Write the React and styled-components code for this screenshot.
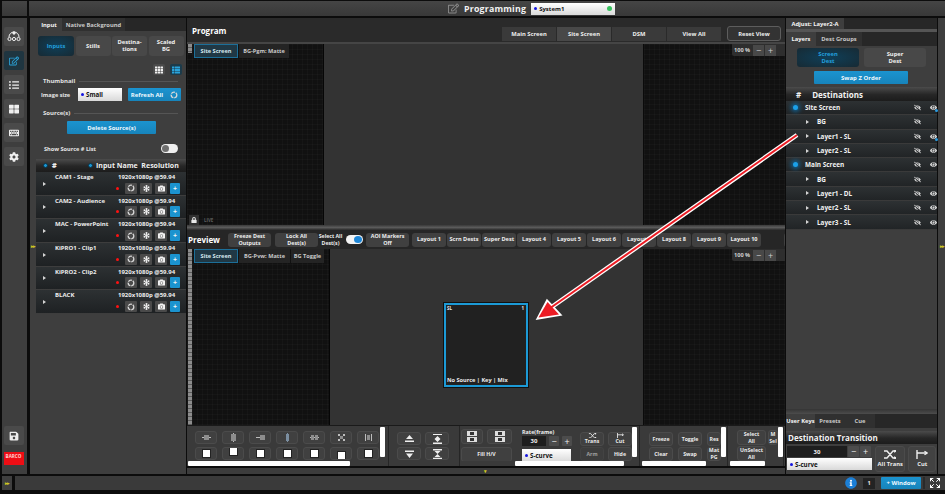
import React from 'react';
import styled, { createGlobalStyle } from 'styled-components';
import {
  FaRegEdit, FaListUl, FaThLarge, FaKeyboard, FaCog, FaSave, FaCamera, FaEye, FaEyeSlash,
  FaLock, FaInfoCircle, FaTh, FaThList, FaSnowflake,
} from 'react-icons/fa';
import { LuExpand } from 'react-icons/lu';

const GlobalStyle = createGlobalStyle`
  html, body { margin: 0; padding: 0; background: #0c0c0c; overflow: hidden; }
  * { box-sizing: border-box; }
`;

const FONT = `'Open Sans', 'Liberation Sans', sans-serif`;
const BLUE = '#1b93cf';
const PANEL = '#3e3e3e';

const Screen = styled.div`
  position: relative;
  width: 945px;
  height: 494px;
  background: #0c0c0c;
  overflow: hidden;
  font-family: ${FONT};
  font-weight: 700;
  font-size: 6px;
  color: #eee;
  display: flex;
  flex-direction: column;
  padding-top: 1px;
`;

const TopBar = styled.div`
  height: 15px;
  margin-bottom: 2px;
  display: grid;
  grid-template-columns: 25px 1fr;
  column-gap: 2px;
  padding-left: 2px;
`;

const TopBlock = styled.div`
  background: linear-gradient(#454545, #383838);
`;

const TopTitleBar = styled(TopBlock)`
  display: flex;
  align-items: center;
  padding-left: 419px;
  color: #8b8b8b;
  font-size: 11px;
`;

const TopTitle = styled.span`
  font-size: 8.8px;
  letter-spacing: 0.2px;
  color: #f2f2f2;
  margin: 0 5px 0 5px;
`;

const WhiteSelect = styled.div`
  display: flex;
  align-items: center;
  gap: 2px;
  background: linear-gradient(#ffffff, #d9d9d9);
  color: #111;
  font-size: ${p => p.$size || 6}px;
  width: ${p => p.$w}px;
  height: ${p => p.$h}px;
  padding-left: 3px;
  flex-shrink: 0;
  position: relative;
  & > i { width: 3px; height: 3px; border-radius: 50%; background: #1414e0; flex-shrink: 0; }
`;

const Led = styled.b`
  position: absolute;
  right: 3px;
  top: 3px;
  width: 5px;
  height: 5px;
  border-radius: 50%;
  background: #37c25e;
`;

const Main = styled.div`
  height: 456px;
  display: grid;
  grid-template-columns: 26px 6px 150px 598px 151px 7px;
  column-gap: 1px;
  padding-left: 2px;
`;

const Rail = styled.nav`
  background: ${PANEL};
  border-right: 2px solid #0c0c0c;
  width: 27px;
  display: flex;
  flex-direction: column;
  align-items: center;
  gap: 5px;
  padding: 9px 2px 9px 0;
`;

const RailButton = styled.div`
  width: 20px;
  height: 19px;
  border-radius: 2px;
  background: ${p => (p.$active ? '#1f3540' : '#4a4a4a')};
  color: ${p => (p.$active ? '#2ba3d9' : '#efefef')};
  display: flex;
  align-items: center;
  justify-content: center;
  font-size: 10px;
  flex-shrink: 0;
`;

const RailSpacer = styled.div`
  flex: 1;
`;

const Barco = styled.div`
  width: 20px;
  height: 13px;
  margin-top: 2px;
  background: #ee0d14;
  color: #ffd0d0;
  font-size: 4.6px;
  text-align: center;
  line-height: 9px;
`;

const Gutter = styled.div`
  background: ${PANEL};
  display: flex;
  align-items: center;
  justify-content: center;
  color: #d2ca22;
  font-size: 5px;
  letter-spacing: -1px;
`;

const LeftGutter = styled(Gutter)`
  margin-left: 1px;
  margin-right: -1px;
`;

const Panel = styled.section`
  background: ${PANEL};
  display: flex;
  flex-direction: column;
  min-width: 0;
`;

const TabRow = styled.div`
  display: flex;
  height: ${p => p.$h}px;
  background: #272727;
  flex-shrink: 0;
`;

const Tab = styled.div`
  width: ${p => p.$w}px;
  background: ${p => (p.$active ? PANEL : '#303030')};
  color: ${p => (p.$active ? '#f5f5f5' : '#c9c9c9')};
  display: flex;
  align-items: center;
  justify-content: center;
  font-size: 5.8px;
`;

const SegRow = styled.div`
  display: flex;
  gap: ${p => p.$gap}px;
  margin: ${p => p.$m};
`;

const Seg = styled.div`
  width: ${p => p.$w}px;
  height: ${p => p.$h}px;
  border-radius: 3px;
  background: ${p => (p.$active ? 'radial-gradient(#0f3f58, #172a34)' : '#484848')};
  color: ${p => (p.$active ? '#229fdd' : '#f0f0f0')};
  display: flex;
  align-items: center;
  justify-content: center;
  text-align: center;
  line-height: 7px;
  font-size: 5.8px;
`;

const ViewSwitch = styled.div`
  display: flex;
  justify-content: flex-end;
  gap: 5px;
  margin: 8px 4px 0 0;
`;

const ViewButton = styled.div`
  width: 12px;
  height: 11px;
  border-radius: 2px;
  background: ${p => (p.$active ? '#1c3b4b' : '#4b4b4b')};
  color: ${p => (p.$active ? '#29a3dc' : '#f0f0f0')};
  display: flex;
  align-items: center;
  justify-content: center;
  font-size: 8px;
`;

const Legend = styled.div`
  display: flex;
  align-items: center;
  gap: 4px;
  margin: ${p => p.$m};
  font-size: 6px;
  color: #e2e2e2;
  &::after { content: ''; flex: 1; height: 1px; background: #555; }
`;

const FormRow = styled.div`
  display: flex;
  align-items: center;
  margin: ${p => p.$m};
`;

const FieldLabel = styled.span`
  width: ${p => p.$w}px;
  font-size: 5.6px;
  color: #e6e6e6;
  flex-shrink: 0;
`;

const BlueButton = styled.div`
  width: ${p => p.$w}px;
  height: ${p => p.$h}px;
  margin: ${p => p.$m || 0};
  background: linear-gradient(${BLUE}, #1784bb);
  border-radius: 1px;
  color: #eef9ff;
  font-size: 6px;
  display: flex;
  align-items: center;
  justify-content: center;
  gap: 7px;
  flex-shrink: 0;
`;

const SwitchTrack = styled.div`
  width: 17px;
  height: 9px;
  border-radius: 5px;
  background: ${p => (p.$on ? '#f4f4f4' : '#f0f0f0')};
  display: flex;
  align-items: center;
  padding: 0 1px;
  justify-content: ${p => (p.$on ? 'flex-end' : 'flex-start')};
  flex-shrink: 0;
  &::after {
    content: '';
    width: ${p => (p.$on ? 8 : 7)}px;
    height: 7px;
    border-radius: 50%;
    background: ${p => (p.$on ? '#1e86d6' : '#6f6f6f')};
  }
`;

const StripedHeader = styled.div`
  height: ${p => p.$h}px;
  background: linear-gradient(#4b4b4b, #262626 55%, #1c1c1c);
  display: flex;
  align-items: center;
  flex-shrink: 0;
  margin: ${p => p.$m || 0};
`;

const HeadLed = styled.i`
  width: 5px;
  height: 5px;
  border-radius: 50%;
  background: #1a96d4;
  border: 1px solid #0a3347;
  flex-shrink: 0;
`;

const SourceHeader = styled(StripedHeader)`
  padding-left: 7px;
  font-size: 7px;
  & > b { margin-left: 4px; width: 36px; }
  & > span { margin-left: 3px; }
`;

const SourceRow = styled.div`
  height: 23.65px;
  background: linear-gradient(#2d3133, #1e2123);
  border-bottom: 1px solid #3d3d3d;
  display: grid;
  grid-template-columns: 19px 63px 1fr;
  grid-template-rows: 9px 1fr;
  font-size: 6px;
  padding-top: 1px;
`;

const Caret = styled.i`
  width: 0;
  height: 0;
  border-left: 3px solid #d5d5d5;
  border-top: 2px solid transparent;
  border-bottom: 2px solid transparent;
  flex-shrink: 0;
`;

const SourceCaret = styled(Caret)`
  grid-row: 1 / 3;
  align-self: center;
  margin-left: 7px;
`;

const SourceActions = styled.div`
  grid-column: 2 / 4;
  display: flex;
  align-items: center;
  justify-content: flex-end;
  gap: 3px;
  padding-right: 6px;
`;

const RedDot = styled.i`
  width: 3px;
  height: 3px;
  background: #f11;
  border-radius: 50%;
  margin-right: 3px;
`;

const IconChip = styled.div`
  width: ${p => p.$w || 12}px;
  height: 11px;
  background: ${p => (p.$blue ? BLUE : '#4a4a4a')};
  border-radius: 1px;
  color: #f3f3f3;
  display: flex;
  align-items: center;
  justify-content: center;
  font-size: 7px;
`;

const Center = styled.div`
  display: flex;
  flex-direction: column;
  min-width: 0;
`;

const ProgramHeader = styled.div`
  height: 26px;
  background: #2a2a2a;
  border-bottom: 2px solid #454545;
  display: flex;
  align-items: flex-start;
  padding: 8px 4px 0 5px;
`;

const SectionTitle = styled.div`
  font-size: 8px;
  color: #fff;
  line-height: 9px;
`;

const HeaderTabs = styled.div`
  margin-left: auto;
  display: flex;
  gap: 1px;
`;

const HeaderTab = styled.div`
  width: 54px;
  height: 14px;
  background: ${p => (p.$active ? '#484848' : '#3a3a3a')};
  display: flex;
  align-items: center;
  justify-content: center;
  font-size: 5.8px;
  margin-top: 1px;
`;

const ResetButton = styled(HeaderTab)`
  background: #333;
  border: 1px solid #5d5d5d;
  border-radius: 3px;
  margin-left: 5px;
  margin-top: 0;
  height: 15px;
`;

const Canvas = styled.div`
  position: relative;
  height: ${p => p.$h}px;
  display: grid;
  grid-template-columns: ${p => p.$left}px 1fr 141px;
  flex-shrink: 0;
`;

const Void = styled.div`
  background-color: #111;
  background-image:
    linear-gradient(rgba(255, 255, 255, 0.018) 1px, transparent 1px),
    linear-gradient(90deg, rgba(255, 255, 255, 0.018) 1px, transparent 1px);
  background-size: 5px 5px;
  border-right: ${p => (p.$edge ? '1px solid #060606' : 0)};
`;

const Stage = styled.div`
  background: #333;
  border-right: 1px solid #0b0b0b;
`;

const CanvasTabs = styled.div`
  position: absolute;
  top: 0;
  left: 0;
  display: flex;
  align-items: flex-start;
  gap: 1px;
  padding-left: 7px;
`;

const CanvasTab = styled.div`
  width: ${p => p.$w}px;
  height: 14px;
  background: ${p => (p.$active ? '#203845' : '#242424')};
  border: ${p => (p.$active ? '1px solid #1c6f99' : 0)};
  color: ${p => (p.$active ? '#d6e8ef' : '#c9c9c9')};
  display: flex;
  align-items: center;
  justify-content: center;
  font-size: 5.6px;
`;

const ScrollStrip = styled.div`
  position: absolute;
  top: 0;
  left: 1px;
  width: 4px;
  height: ${p => p.$h}px;
  background: repeating-linear-gradient(#8d8d8d 0 3px, #5c5c5c 3px 4px);
`;

const ZoomBox = styled.div`
  position: absolute;
  top: 0;
  right: 0;
  width: 53px;
  height: 12px;
  background: #2e2e2e;
  display: flex;
  align-items: center;
  gap: 1px;
  padding-left: 2px;
  font-size: 5.6px;
  color: #cfcfcf;
  border-radius: 0 0 0 2px;
  & > span { width: 18px; }
`;

const ZoomKey = styled.div`
  width: 11px;
  height: 11px;
  background: #484848;
  display: flex;
  align-items: center;
  justify-content: center;
  font-size: 9px;
  font-weight: 400;
`;

const LiveBadge = styled.div`
  position: absolute;
  left: 2px;
  bottom: 0;
  height: 10px;
  display: flex;
  align-items: center;
  color: #5d5d5d;
  font-size: 4.4px;
`;

const LockChip = styled.div`
  width: 10px;
  height: 10px;
  background: #303030;
  color: #e8e8e8;
  font-size: 6px;
  display: flex;
  align-items: center;
  justify-content: center;
  margin-right: 5px;
`;

const Divider = styled.div`
  height: 5px;
  background: linear-gradient(#3a3a3a, #5a5a5a 50%, #2b2b2b);
  flex-shrink: 0;
`;

const PreviewBar = styled.div`
  height: 19px;
  background: #262626;
  display: flex;
  align-items: center;
  padding-left: 1px;
  overflow: hidden;
  flex-shrink: 0;
`;

const PreviewTitle = styled(SectionTitle)`
  width: 39px;
  flex-shrink: 0;
`;

const BarButton = styled.div`
  width: ${p => p.$w}px;
  height: 14px;
  margin-left: ${p => p.$ml ?? 1}px;
  border-radius: 3px;
  background: #404040;
  display: flex;
  align-items: center;
  justify-content: center;
  text-align: center;
  font-size: ${p => p.$fs || 5.4}px;
  line-height: 7px;
  flex-shrink: 0;
`;

const BarText = styled.div`
  margin-right: 3px;
  width: 25px;
  line-height: 7px;
  font-size: 5.2px;
  text-align: center;
  flex-shrink: 0;
`;

const LayerBox = styled.div`
  position: absolute;
  left: 257px;
  top: 54px;
  width: 84px;
  height: 84px;
  background: #212121;
  border: 2px solid #1c9ad6;
  outline: 1px solid #111;
  display: flex;
  flex-direction: column;
  justify-content: space-between;
  padding: 0 2px 1px 1px;
`;

const LayerLine = styled.div`
  display: flex;
  justify-content: space-between;
  font-size: ${p => p.$fs}px;
`;

const Controls = styled.div`
  height: 41px;
  background: #3a3a3a;
  border-top: 1px solid #1a1a1a;
  display: flex;
  flex-shrink: 0;
`;

const Group = styled.div`
  width: ${p => p.$w}px;
  display: flex;
  flex-direction: column;
  border-right: 1px solid #262626;
  flex-shrink: 0;
  min-width: 0;
  overflow: hidden;
`;

const GroupBody = styled.div`
  height: 35px;
  display: flex;
  flex-shrink: 0;
`;

const GroupView = styled.div`
  flex: ${p => (p.$fixed ? `0 0 ${p.$fixed}px` : 1)};
  min-width: 0;
  overflow: hidden;
  display: grid;
  grid-template-columns: ${p => p.$cols};
  grid-auto-rows: ${p => p.$row || '14px'};
  row-gap: ${p => p.$rowGap ?? 3}px;
  column-gap: ${p => p.$colGap ?? 5}px;
  padding: ${p => p.$pad};
  align-content: start;
`;

const VBar = styled.div`
  width: 5px;
  height: 30px;
  margin: 1px ${p => p.$mr || 0}px 0 0;
  background: #fff;
  border-radius: 1px;
  flex-shrink: 0;
`;

const HBar = styled.div`
  width: ${p => p.$w}px;
  height: 5px;
  margin-left: ${p => p.$ml}px;
  background: #fff;
  border-radius: 1px;
  flex-shrink: 0;
`;

const CtlButton = styled.div`
  background: #404040;
  border: 1px solid #4b4b4b;
  border-radius: 3px;
  color: #ececec;
  font-size: 5.2px;
  line-height: 6.6px;
  text-align: center;
  display: flex;
  flex-direction: column;
  align-items: ${p => p.$ax || 'center'};
  justify-content: ${p => p.$ay || 'center'};
  min-width: 0;
  overflow: hidden;
  opacity: ${p => (p.$dim ? 0.55 : 1)};
  grid-column: ${p => p.$span || 'auto'};
  grid-row: ${p => p.$rows || 'auto'};
`;

const WhiteSquare = styled.i`
  width: 7px;
  height: 7px;
  background: #fff;
  box-shadow: 0 0 0 1px #222;
`;

const RateCol = styled.div`
  width: 58px;
  display: flex;
  flex-direction: column;
  flex-shrink: 0;
`;

const RateLabel = styled.div`
  font-size: 5.4px;
  line-height: 7px;
  margin-top: ${p => p.$mt || 0}px;
`;

const RateRow = styled.div`
  display: flex;
  align-items: center;
  gap: ${p => p.$gap || 2}px;
  margin: ${p => p.$m || 0};
`;

const NumberField = styled.div`
  width: ${p => p.$w}px;
  height: ${p => p.$h || 10}px;
  background: #1e1e1e;
  color: #f0f0f0;
  font-size: 6px;
  display: flex;
  align-items: center;
  justify-content: center;
  flex-shrink: 0;
`;

const StepKey = styled.div`
  width: ${p => p.$w || 10}px;
  height: ${p => p.$h || 10}px;
  background: #4c4c4c;
  border-radius: 1px;
  display: flex;
  align-items: center;
  justify-content: center;
  font-size: 9px;
  font-weight: 400;
  flex-shrink: 0;
`;

const MiddleTrack = styled.div`
  flex: 1;
  display: flex;
  min-width: 0;
  overflow: hidden;
`;

const TransGrid = styled.div`
  display: grid;
  grid-template-columns: 24px 24px;
  grid-auto-rows: 14px;
  gap: 1px 4px;
  padding-top: 6px;
  flex-shrink: 0;
`;

const BottomStrip = styled.div`
  height: 6px;
  margin-top: 2px;
  background: #3c3c3c;
  flex-shrink: 0;
  color: #d2ca22;
  font-size: 5px;
  line-height: 6px;
  padding-left: 297px;
`;

const RightTabLine = styled.div`
  height: 3px;
  background: #555;
  flex-shrink: 0;
`;

const DestRow = styled.div`
  height: 14.3px;
  background: linear-gradient(#2d3133, #212426);
  border-bottom: 1px solid #3a3a3a;
  display: flex;
  align-items: center;
  font-size: 6.4px;
  color: #f2f2f2;
  padding-left: ${p => (p.$child ? 20 : 7)}px;
  flex-shrink: 0;
  & > span { margin-left: ${p => (p.$child ? 8 : 7)}px; }
`;

const GlowLed = styled.i`
  width: 5px;
  height: 5px;
  border-radius: 50%;
  background: #1ba0e8;
  box-shadow: 0 0 4px 2px #125f8e;
  flex-shrink: 0;
`;

const RowIcons = styled.div`
  margin-left: auto;
  width: 23px;
  display: flex;
  justify-content: space-between;
  color: #d8d8d8;
  font-size: 7px;
  & > svg:only-child { margin-right: auto; }
`;

const EyeWrap = styled.span`
  position: relative;
  display: flex;
  margin-left: 0 !important;
  &::after {
    content: '';
    display: ${p => (p.$mark ? 'block' : 'none')};
    position: absolute;
    right: -1px;
    bottom: -1px;
    width: 3px;
    height: 3px;
    border-radius: 50%;
    background: #2a9be0;
  }
`;

const Grip = styled.div`
  margin-top: auto;
  height: 5px;
  background: linear-gradient(#353535, #4c4c4c);
  flex-shrink: 0;
`;

const DestHeader = styled(StripedHeader)`
  font-size: 8px;
  padding-left: ${p => p.$pl}px;
  color: #f2f2f2;
  & > span { margin-left: 11px; }
`;

const TransitionBody = styled.div`
  display: flex;
  padding: 2px 1px 2px 1px;
  gap: 3px;
`;

const TransitionLeft = styled.div`
  width: 85px;
  display: flex;
  flex-direction: column;
  gap: 1px;
  flex-shrink: 0;
`;

const BigButton = styled(CtlButton)`
  width: ${p => p.$w}px;
  height: 26px;
  font-size: 5.8px;
  gap: 2px;
  background: #424242;
`;

const BottomBar = styled.footer`
  margin-top: 2px;
  height: 14px;
  display: grid;
  grid-template-columns: 10px 1fr;
  column-gap: 3px;
  padding-left: 2px;
`;

const BottomCell = styled.div`
  background: #3a3a3a;
  display: flex;
  align-items: center;
  justify-content: flex-end;
  color: #d2ca22;
  font-size: 5px;
  letter-spacing: -1px;
`;

const StartCell = styled(BottomCell)`
  justify-content: center;
  background: #3f3f3f;
`;

const InfoIcon = styled.div`
  color: #1c7fd6;
  background: radial-gradient(#fff 40%, transparent 45%);
  font-size: 12px;
  display: flex;
  margin-right: 6px;
`;

const PageField = styled.div`
  width: 12px;
  height: 11px;
  background: #232323;
  color: #eee;
  font-size: 5.5px;
  letter-spacing: 0;
  display: flex;
  align-items: center;
  justify-content: center;
  margin-right: 6px;
`;

const FullscreenCell = styled.div`
  width: 22px;
  margin-left: 2px;
  border-left: 2px solid #2a2a2a;
  color: #fff;
  font-size: 12px;
  display: flex;
  align-items: center;
  justify-content: center;
`;

const WindowButton = styled(BlueButton)`
  letter-spacing: 0;
`;

const ArrowOverlay = styled.svg`
  position: absolute;
  inset: 0;
  pointer-events: none;
`;

const DomeIcon = () => (
  <svg width="14" height="11" viewBox="0 0 14 11" fill="none" stroke="#efefef" strokeWidth="1">
    <path d="M2 6a5 5 0 0 1 10 0" />
    <circle cx="2.5" cy="8" r="1.6" />
    <circle cx="7" cy="8" r="1.6" />
    <circle cx="11.5" cy="8" r="1.6" />
    <circle cx="7" cy="2" r="1.2" fill="#efefef" />
  </svg>
);

const RingIcon = () => (
  <svg width="8" height="8" viewBox="0 0 8 8" fill="none" stroke="#d8d8d8" strokeWidth="1.3">
    <circle cx="4" cy="4" r="2.8" strokeDasharray="4 0.9" />
  </svg>
);

const AlignGlyph = ({ bars }) => (
  <svg width="11" height="9" viewBox="0 0 11 9">
    {bars.map((b, i) => (
      <rect key={i} x={b[0]} y={b[1]} width={b[2]} height={b[3]} fill={b[4] || '#bdbdbd'} />
    ))}
  </svg>
);

const StackArrows = ({ kind }) => (
  <svg width="9" height="10" viewBox="0 0 9 10" fill="#eee">
    {kind === 'up' && <path d="M4.5 1 8 5H1zM0 6.5h9V8H0z" />}
    {kind === 'top' && <path d="M0 0h9v1H0zM4.5 2 7.5 5h-6zM4.5 8 7.5 5h-6zM0 8.5h9V10H0z" />}
    {kind === 'down' && <path d="M0 1.5h9V3H0zM1 4.5h7L4.5 9z" />}
    {kind === 'bottom' && <path d="M0 0h9v1.5H0zM1.5 2h6L4.5 5zM1.5 8h6L4.5 5zM0 8.8h9v1.2H0z" />}
  </svg>
);

const FillGlyph = () => (
  <svg width="10" height="11" viewBox="0 0 10 11" fill="#ddd">
    <rect x="0" y="0" width="10" height="5" />
    <rect x="0" y="6" width="10" height="5" />
    <rect x="3" y="1" width="4" height="3" fill="#333" />
    <rect x="3" y="7" width="4" height="3" fill="#333" />
  </svg>
);

const TransGlyph = ({ size = 9 }) => (
  <svg width={size} height={size * 0.75} viewBox="0 0 12 9" fill="none" stroke="#eee" strokeWidth="1.4">
    <path d="M0 1h3l6 7h3M0 8h3l6-7h3" />
    <path d="M10 0l2 1-2 1M10 7l2 1-2 1" />
  </svg>
);

const CutGlyph = ({ size = 9 }) => (
  <svg width={size} height={size * 0.75} viewBox="0 0 12 9" fill="none" stroke="#eee" strokeWidth="1.4">
    <path d="M1 0v9M1 3h9" />
    <path d="M8.5 1.2 11 3 8.5 4.8" />
  </svg>
);

const ALIGN_TOP = [
  [[1, 4, 9, 1], [3, 2, 5, 5, '#8d8d8d']],
  [[5, 0, 1, 9], [3, 1, 5, 7, '#8d8d8d']],
  [[1, 4, 9, 1], [5, 2, 5, 5, '#8d8d8d']],
  [[5, 0, 1, 9, '#7b8ea0'], [4, 1, 3, 7, '#7b8ea0']],
  [[1, 4, 9, 1], [2, 2, 3, 5, '#8d8d8d'], [6, 2, 3, 5, '#8d8d8d']],
  [[2, 1, 2, 2], [7, 1, 2, 2], [2, 6, 2, 2], [7, 6, 2, 2], [4, 3, 3, 3, '#8d8d8d']],
  [[2, 1, 1, 7], [8, 1, 1, 7], [4, 2, 3, 5, '#8d8d8d']],
];

const SQUARES = [
  {}, { $ay: 'flex-start' }, {}, {}, {}, { $ay: 'flex-end' }, {},
];

const SOURCES = ['CAM1 - Stage', 'CAM2 - Audience', 'MAC - PowerPoint', 'KiPRO1 - Clip1', 'KiPRO2 - Clip2', 'BLACK'];

const DESTS = [
  { name: 'Site Screen', head: true, eye: true, mark: true },
  { name: 'BG' },
  { name: 'Layer1 - SL', eye: true, mark: true },
  { name: 'Layer2 - SL', eye: true },
  { name: 'Main Screen', head: true, eye: true },
  { name: 'BG' },
  { name: 'Layer1 - DL', eye: true },
  { name: 'Layer2 - SL', eye: true },
  { name: 'Layer3 - SL', eye: true },
];

const LAYOUTS = ['Layout 1', 'Scrn Dests', 'Super Dest', 'Layout 4', 'Layout 5', 'Layout 6', 'Layout 7', 'Layout 8', 'Layout 9', 'Layout 10'];

const InputPanel = () => (
  <Panel>
    <TabRow $h={13}>
      <Tab $w={26} $active>Input</Tab>
      <Tab $w={63}>Native Background</Tab>
    </TabRow>
    <SegRow $gap={1.5} $m="5px 0 0 2px">
      <Seg $w={36} $h={20} $active>Inputs</Seg>
      <Seg $w={35} $h={20}>Stills</Seg>
      <Seg $w={35} $h={20}>Destina-<br />tions</Seg>
      <Seg $w={35} $h={20}>Scaled<br />BG</Seg>
    </SegRow>
    <ViewSwitch>
      <ViewButton><FaTh /></ViewButton>
      <ViewButton $active><FaThList /></ViewButton>
    </ViewSwitch>
    <Legend $m="2px 8px 0 7px">Thumbnail</Legend>
    <FormRow $m="3px 0 0 5px">
      <FieldLabel $w={37}>Image size</FieldLabel>
      <WhiteSelect $w={44} $h={13} $size={6.2}><i />Small</WhiteSelect>
      <BlueButton $w={53} $h={13} $m="0 0 0 6px">Refresh All <RingIcon /></BlueButton>
    </FormRow>
    <Legend $m="8px 8px 0 7px">Source(s)</Legend>
    <BlueButton $w={89} $h={13} $m="4px 0 0 31px">Delete Source(s)</BlueButton>
    <FormRow $m="10px 8px 0 8px">
      <FieldLabel $w={117}>Show Source # List</FieldLabel>
      <SwitchTrack />
    </FormRow>
    <SourceHeader $h={13} $m="6px 0 0 0">
      <HeadLed />
      <b>#</b>
      <HeadLed />
      <span>Input Name&nbsp; Resolution</span>
    </SourceHeader>
    {SOURCES.map(name => (
      <SourceRow key={name}>
        <SourceCaret />
        <span>{name}</span>
        <span>1920x1080p @59.94</span>
        <SourceActions>
          <RedDot />
          <IconChip><RingIcon /></IconChip>
          <IconChip><FaSnowflake /></IconChip>
          <IconChip><FaCamera /></IconChip>
          <IconChip $blue $w={10}>+</IconChip>
        </SourceActions>
      </SourceRow>
    ))}
  </Panel>
);

const ZoomControl = () => (
  <ZoomBox>
    <span>100 %</span>
    <ZoomKey>−</ZoomKey>
    <ZoomKey>+</ZoomKey>
  </ZoomBox>
);

const ProgramSection = () => (
  <>
    <ProgramHeader>
      <SectionTitle>Program</SectionTitle>
      <HeaderTabs>
        <HeaderTab>Main Screen</HeaderTab>
        <HeaderTab $active>Site Screen</HeaderTab>
        <HeaderTab>DSM</HeaderTab>
        <HeaderTab>View All</HeaderTab>
        <ResetButton>Reset View</ResetButton>
      </HeaderTabs>
    </ProgramHeader>
    <Canvas $h={181} $left={137}>
      <Void $edge />
      <Stage />
      <Void />
      <ScrollStrip $h={9} />
      <CanvasTabs>
        <CanvasTab $w={44} $active>Site Screen</CanvasTab>
        <CanvasTab $w={50}>BG-Pgm: Matte</CanvasTab>
      </CanvasTabs>
      <ZoomControl />
      <LiveBadge><LockChip><FaLock /></LockChip>LIVE</LiveBadge>
    </Canvas>
  </>
);

const PreviewSection = () => (
  <>
    <Divider />
    <PreviewBar>
      <PreviewTitle>Preview</PreviewTitle>
      <BarButton $w={43}>Freeze Dest<br />Outputs</BarButton>
      <BarButton $w={43} $ml={4}>Lock All<br />Dest(s)</BarButton>
      <BarText>Select All<br />Dest(s)</BarText>
      <SwitchTrack $on />
      <BarButton $w={43} $ml={3}>AOI Markers<br />Off</BarButton>
      {LAYOUTS.map((l, i) => (
        <BarButton key={l} $w={34} $ml={i === 0 ? 3 : 1} $fs={5.6}>{l}</BarButton>
      ))}
      <BarButton $w={34} $ml={23} />
    </PreviewBar>
    <Canvas $h={176} $left={143}>
      <Void $edge />
      <Stage />
      <Void />
      <ScrollStrip $h={176} />
      <CanvasTabs>
        <CanvasTab $w={44} $active>Site Screen</CanvasTab>
        <CanvasTab $w={51}>BG-Pvw: Matte</CanvasTab>
        <CanvasTab $w={33}>BG Toggle</CanvasTab>
      </CanvasTabs>
      <ZoomControl />
      <LayerBox>
        <LayerLine $fs={4.4}><span>SL</span><span>1</span></LayerLine>
        <LayerLine $fs={5.6}><span>No Source | Key | Mix</span></LayerLine>
      </LayerBox>
    </Canvas>
  </>
);

const ControlsSection = () => (
  <Controls>
    <Group $w={202}>
      <GroupBody>
        <GroupView $cols="repeat(7, 22px)" $pad="5px 0 0 8px" $rowGap={3} $row="13px">
          {ALIGN_TOP.map((bars, i) => (
            <CtlButton key={i}><AlignGlyph bars={bars} /></CtlButton>
          ))}
          {SQUARES.map((s, i) => (
            <CtlButton key={i} {...s}><WhiteSquare /></CtlButton>
          ))}
        </GroupView>
        <VBar $mr={3} />
      </GroupBody>
      <HBar $w={162} $ml={1} />
    </Group>
    <Group $w={71}>
      <GroupBody>
        <GroupView $cols="24px 24px" $pad="6px 0 0 8px" $colGap={4} $rowGap={2} $row="13px">
          <CtlButton><StackArrows kind="up" /></CtlButton>
          <CtlButton><StackArrows kind="top" /></CtlButton>
          <CtlButton><StackArrows kind="down" /></CtlButton>
          <CtlButton><StackArrows kind="bottom" /></CtlButton>
        </GroupView>
      </GroupBody>
    </Group>
    <Group $w={180}>
      <GroupBody>
        <MiddleTrack>
          <GroupView $cols="22px 25px" $pad="3px 0 0 1px" $colGap={4} $rowGap={3} $row="15px" $fixed={62}>
            <CtlButton><FillGlyph /></CtlButton>
            <CtlButton><FillGlyph /></CtlButton>
            <CtlButton $span="1 / 3">Fill H/V</CtlButton>
          </GroupView>
          <RateCol>
            <RateLabel $mt={3}>Rate(frame)</RateLabel>
            <RateRow $gap={3}>
              <NumberField $w={24}>30</NumberField>
              <StepKey>−</StepKey>
              <StepKey>+</StepKey>
            </RateRow>
            <RateRow $m="3px 0 0 0">
              <WhiteSelect $w={49} $h={13} $size={6.2}><i />S-curve</WhiteSelect>
            </RateRow>
          </RateCol>
          <TransGrid>
            <CtlButton><TransGlyph />Trans</CtlButton>
            <CtlButton><CutGlyph />Cut</CtlButton>
            <CtlButton $dim>Arm</CtlButton>
            <CtlButton>Hide</CtlButton>
          </TransGrid>
        </MiddleTrack>
        <VBar $mr={2} />
      </GroupBody>
      <HBar $w={109} $ml={55} />
    </Group>
    <Group $w={88}>
      <GroupBody>
        <GroupView $cols="24px 24px 14px" $pad="6px 0 0 9px" $colGap={5} $rowGap={1} $row="14px">
          <CtlButton>Freeze</CtlButton>
          <CtlButton>Toggle</CtlButton>
          <CtlButton>Res</CtlButton>
          <CtlButton>Clear</CtlButton>
          <CtlButton>Swap</CtlButton>
          <CtlButton>Mat<br />PG</CtlButton>
        </GroupView>
        <VBar $mr={1} />
      </GroupBody>
      <HBar $w={64} $ml={2} />
    </Group>
    <Group $w={56}>
      <GroupBody>
        <GroupView $cols="29px 10px" $pad="4px 0 0 9px" $colGap={2} $rowGap={1} $row="15px">
          <CtlButton>Select<br />All</CtlButton>
          <CtlButton>M<br />Sel</CtlButton>
          <CtlButton>UnSelect<br />All</CtlButton>
        </GroupView>
        <VBar />
      </GroupBody>
      <HBar $w={35} $ml={2} />
    </Group>
  </Controls>
);

const RightPanel = () => (
  <Panel>
    <TabRow $h={11}>
      <Tab $w={58} $active>Adjust: Layer2-A</Tab>
    </TabRow>
    <RightTabLine />
    <TabRow $h={14}>
      <Tab $w={30} $active>Layers</Tab>
      <Tab $w={46}>Dest Groups</Tab>
    </TabRow>
    <SegRow $gap={5} $m="2px 0 0 11px">
      <Seg $w={62} $h={19} $active>Screen<br />Dest</Seg>
      <Seg $w={62} $h={19}>Super<br />Dest</Seg>
    </SegRow>
    <BlueButton $w={94} $h={13} $m="4px 0 0 28px">Swap Z Order</BlueButton>
    <DestHeader $h={14} $m="3px 0 0 0" $pl={10}>#<span>Destinations</span></DestHeader>
    {DESTS.map((d, i) => (
      <DestRow key={i} $child={!d.head}>
        {d.head ? <GlowLed /> : <Caret />}
        <span>{d.name}</span>
        <RowIcons>
          <FaEyeSlash />
          {d.eye && <EyeWrap $mark={d.mark}><FaEye /></EyeWrap>}
        </RowIcons>
      </DestRow>
    ))}
    <Grip />
    <TabRow $h={14}>
      <Tab $w={29} $active>User Keys</Tab>
      <Tab $w={30}>Presets</Tab>
      <Tab $w={30}>Cue</Tab>
    </TabRow>
    <DestHeader $h={13} $m="3px 0 0 0" $pl={2}>Destination Transition</DestHeader>
    <TransitionBody>
      <TransitionLeft>
        <RateRow $gap={1}>
          <NumberField $w={60} $h={11}>30</NumberField>
          <StepKey $w={11} $h={11}>−</StepKey>
          <StepKey $w={11} $h={11}>+</StepKey>
        </RateRow>
        <WhiteSelect $w={85} $h={12} $size={6.2}><i />S-curve</WhiteSelect>
      </TransitionLeft>
      <BigButton $w={31}><TransGlyph size={12} />All Trans</BigButton>
      <BigButton $w={28}><CutGlyph size={12} />Cut</BigButton>
    </TransitionBody>
  </Panel>
);

export default function App() {
  return (
    <Screen>
      <GlobalStyle />
      <TopBar>
        <TopBlock />
        <TopTitleBar>
          <FaRegEdit />
          <TopTitle>Programming</TopTitle>
          <WhiteSelect $w={84} $h={12}><i />System1<Led /></WhiteSelect>
        </TopTitleBar>
      </TopBar>
      <Main>
        <Rail>
          <RailButton><DomeIcon /></RailButton>
          <RailButton $active><FaRegEdit /></RailButton>
          <RailButton><FaListUl /></RailButton>
          <RailButton><FaThLarge /></RailButton>
          <RailButton><FaKeyboard /></RailButton>
          <RailButton><FaCog /></RailButton>
          <RailSpacer />
          <RailButton><FaSave /></RailButton>
          <Barco>BARCO</Barco>
        </Rail>
        <LeftGutter>▸▸</LeftGutter>
        <InputPanel />
        <Center>
          <ProgramSection />
          <PreviewSection />
          <ControlsSection />
          <BottomStrip>▾</BottomStrip>
        </Center>
        <RightPanel />
        <Gutter>▸▸</Gutter>
      </Main>
      <BottomBar>
        <StartCell>▸▸</StartCell>
        <BottomCell>
          <InfoIcon><FaInfoCircle /></InfoIcon>
          <PageField>1</PageField>
          <WindowButton $w={40} $h={12}>+ Window</WindowButton>
          <FullscreenCell><LuExpand /></FullscreenCell>
        </BottomCell>
      </BottomBar>
      <ArrowOverlay width="945" height="494" viewBox="0 0 945 494">
        <path d="M797 135 546 311" stroke="#fff" strokeWidth="4.5" />
        <path d="M537 319 547 300 561 315z" fill="#fff" stroke="#fff" strokeWidth="1.5" />
        <path d="M797 135 546 311" stroke="#ec1c24" strokeWidth="2" />
        <path d="M538.5 317.5 547.5 302 559 314.5z" fill="#ec1c24" />
      </ArrowOverlay>
    </Screen>
  );
}
